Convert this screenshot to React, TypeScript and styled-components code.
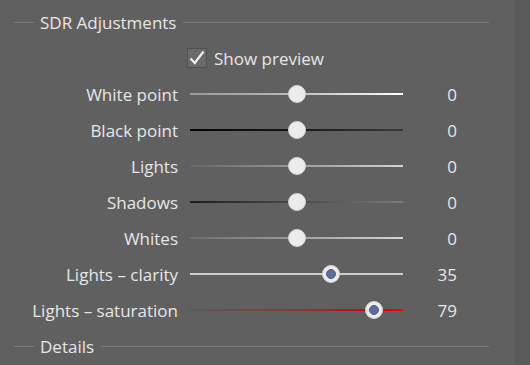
import React from 'react';
import styled, { createGlobalStyle } from 'styled-components';

const GlobalStyle = createGlobalStyle`
    html, body {
        margin: 0;
        padding: 0;
        background: #606060;
    }
    body {
        font-family: "Open Sans", "Noto Sans", sans-serif;
        color: #e6e6e6;
    }
`;

interface Adjustment {
    label: string;
    value: number;
    track: string;
    accent?: boolean;
}

const adjustments: Adjustment[] = [
    { label: 'White point', value: 0, track: 'linear-gradient(to right, #9a9a9a, #b8b8b8 45%, #ffffff)' },
    { label: 'Black point', value: 0, track: 'linear-gradient(to right, #050505, #151515 45%, #3a3a3a)' },
    { label: 'Lights', value: 0, track: 'linear-gradient(to right, #676767, #9a9a9a 50%, #d4d4d4)' },
    { label: 'Shadows', value: 0, track: 'linear-gradient(to right, #1e1e1e, #4a4a4a 50%, #7a7a7a)' },
    { label: 'Whites', value: 0, track: 'linear-gradient(to right, #6e6e6e, #9e9e9e 50%, #d6d6d6)' },
    { label: 'Lights \u2013 clarity', value: 35, track: '#cfcfcf', accent: true },
    { label: 'Lights \u2013 saturation', value: 79, track: 'linear-gradient(to right, #5a5a5a, #8a3a3a 45%, #e00000 85%, #ff0000)', accent: true },
];

const Page = styled.div`
    display: flex;
    width: 530px;
    height: 365px;
    overflow: hidden;
`;

const Panel = styled.div`
    flex: 1;
    padding: 4px 26px 0 14px;
    display: flex;
    flex-direction: column;
`;

const Scrollbar = styled.div`
    width: 15px;
    background: #5a5a5a;
`;

const SectionHeader = styled.div`
    display: flex;
    align-items: center;
    height: 36px;
    font-size: 17px;
    gap: 6px;
    &::before, &::after {
        content: '';
        height: 1px;
        background: #7a7a7a;
    }
    &::before {
        width: 20px;
    }
    &::after {
        flex: 1;
        margin-left: 1px;
    }
`;

const CheckRow = styled.label`
    display: flex;
    align-items: center;
    height: 36px;
    padding-left: 173px;
    gap: 7px;
    font-size: 17px;
`;

const CheckBox = styled.span`
    width: 18px;
    height: 18px;
    border: 1px solid #525252;
    background: #6a6a6a;
    display: flex;
    align-items: center;
    justify-content: center;
`;

const Row = styled.div`
    display: grid;
    grid-template-columns: 164px 213px 42px;
    column-gap: 12px;
    align-items: center;
    height: 36px;
    font-size: 17px;
`;

const Label = styled.span`
    text-align: right;
    white-space: nowrap;
`;

const Value = styled.span`
    text-align: right;
`;

const SliderBox = styled.div`
    position: relative;
    height: 18px;
    display: flex;
    align-items: center;
`;

const Track = styled.div<{ $bg: string }>`
    width: 100%;
    height: 2px;
    background: ${(p) => p.$bg};
`;

const Thumb = styled.div<{ $accent?: boolean }>`
    position: absolute;
    top: 0;
    width: 18px;
    height: 18px;
    margin-left: -9px;
    border-radius: 50%;
    box-sizing: border-box;
    background: #ececec;
    border: 1px solid #d2d2d2;
    display: flex;
    align-items: center;
    justify-content: center;
    &::after {
        content: '';
        display: ${(p) => (p.$accent ? 'block' : 'none')};
        width: 10px;
        height: 10px;
        border-radius: 50%;
        background: #5c6e9e;
        border: 1px solid #4c5d88;
        box-sizing: border-box;
    }
`;

const Slider = ({ value, track, accent }: { value: number; track: string; accent?: boolean }) => {
    // usable range is the track minus half a thumb each side
    const left = 9 + ((value + 100) / 200) * (213 - 18);
    return (
        <SliderBox>
            <Track $bg={track} />
            <Thumb $accent={accent} style={{ left }} />
        </SliderBox>
    );
};

const App = () => {
    return (
        <Page>
            <GlobalStyle />
            <Panel>
                <SectionHeader>SDR Adjustments</SectionHeader>
                <CheckRow>
                    <CheckBox>
                        <svg width="18" height="18" viewBox="0 0 18 18">
                            <path d="M2.5 9.5 L6.8 14 L15.5 2.5" fill="none" stroke="#f0f0f0" strokeWidth="2.2" />
                        </svg>
                    </CheckBox>
                    Show preview
                </CheckRow>
                {adjustments.map((a) => (
                    <Row key={a.label}>
                        <Label>{a.label}</Label>
                        <Slider value={a.value} track={a.track} accent={a.accent} />
                        <Value>{a.value}</Value>
                    </Row>
                ))}
                <SectionHeader>Details</SectionHeader>
            </Panel>
            <Scrollbar />
        </Page>
    );
};

export default App;
